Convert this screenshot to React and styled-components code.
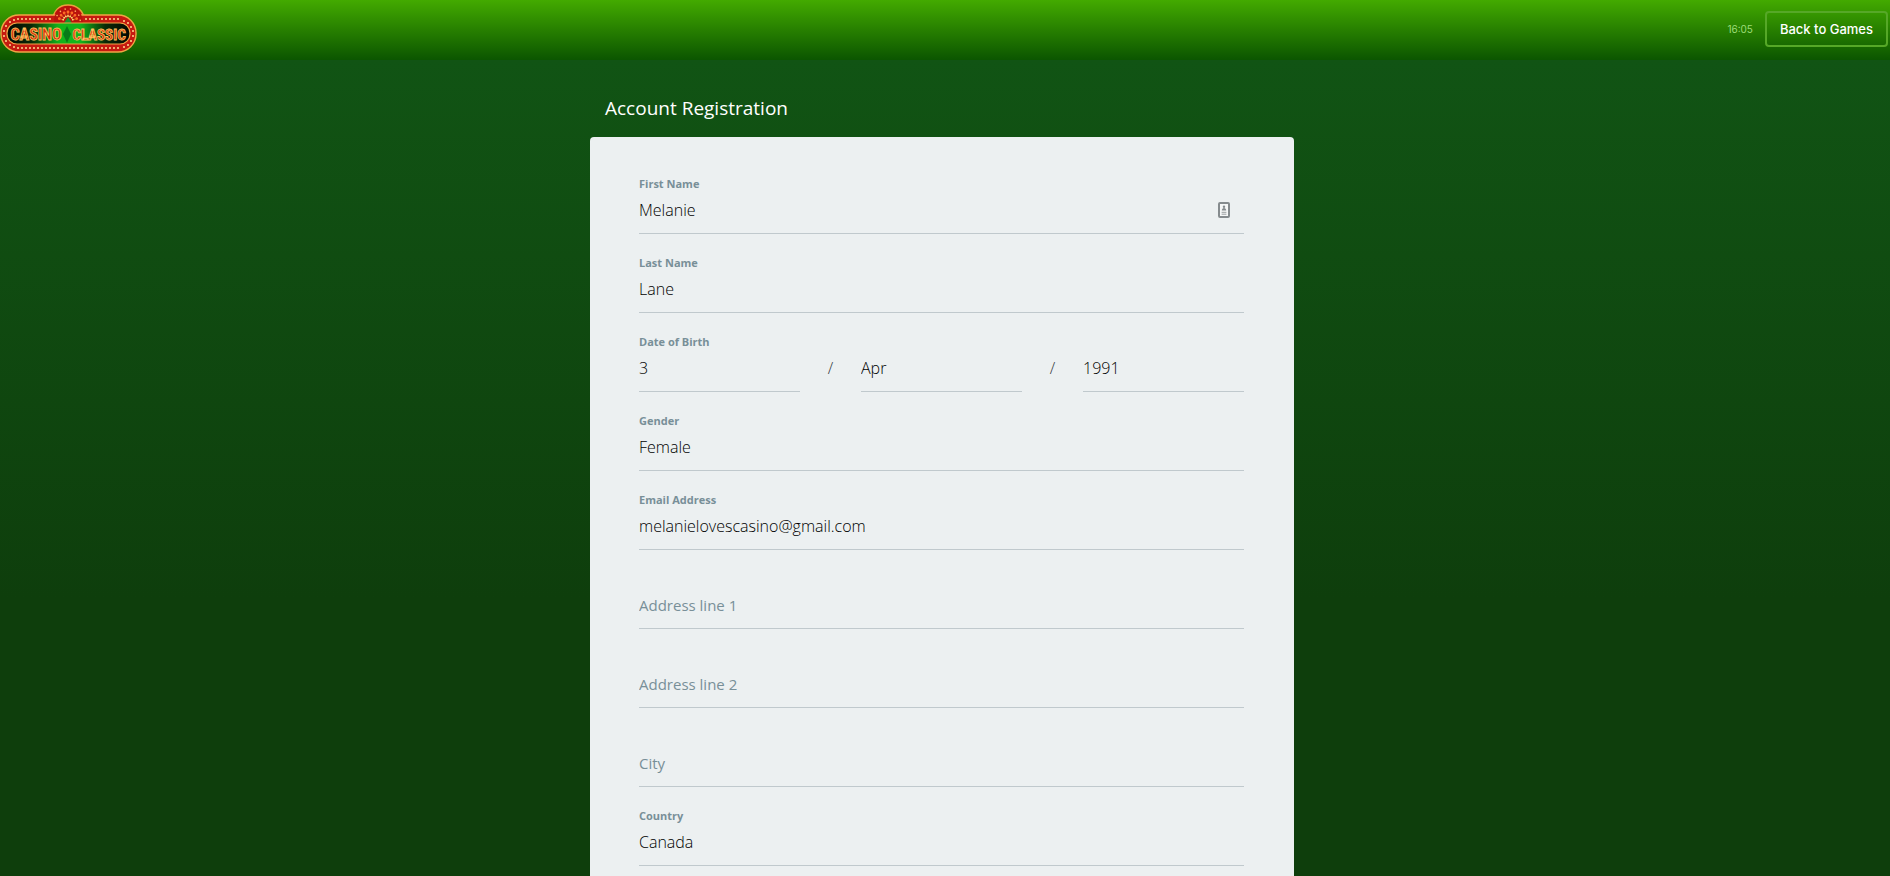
import React from "react";
import styled, { createGlobalStyle } from "styled-components";

const GlobalStyle = createGlobalStyle`
  *, *::before, *::after { box-sizing: border-box; }
  body {
    margin: 0;
    background: #0e3e0c;
    font-family: "Open Sans", "Noto Sans", sans-serif;
  }
`;

const Page = styled.div`
  display: flex;
  flex-direction: column;
  min-height: 100vh;
  background: linear-gradient(#115414 60px, #0e3e0c 600px);
`;

const Header = styled.header`
  display: flex;
  align-items: center;
  justify-content: space-between;
  height: 60px;
  padding: 0 2px 2px 0;
  background: linear-gradient(#43aa00, #0b5500);
`;

const LogoLink = styled.a`
  display: flex;
`;

const HeaderActions = styled.div`
  display: flex;
  align-items: center;
  gap: 12px;
`;

const Clock = styled.time`
  color: #9ddc78;
  font: 400 10px/16px Inter, sans-serif;
`;

const BackButton = styled.button`
  height: 36px;
  padding: 0 13px;
  border: 2px solid #56a827;
  border-radius: 4px;
  background: transparent;
  color: #fff;
  font: 500 13px/20px Inter, sans-serif;
  cursor: pointer;
`;

const Main = styled.main`
  display: flex;
  flex: 1;
  flex-direction: column;
  align-items: center;
  padding-right: 6px;
`;

const Column = styled.div`
  display: flex;
  flex: 1;
  flex-direction: column;
  width: 100%;
  max-width: 704px;
`;

const Title = styled.h1`
  margin: 0;
  padding: 34px 15px 15px;
  color: #fff;
  font-size: 19px;
  font-weight: 500;
  line-height: 28px;
`;

const Card = styled.form`
  flex: 1;
  padding: 34px 50px 0 49px;
  border-radius: 4px 4px 0 0;
  background: #ecf0f1;
`;

const FieldBox = styled.div`
  display: flex;
  flex-direction: column;
  justify-content: flex-end;
  height: 79px;
  padding-bottom: 16px;
  min-width: 0;
`;

const FieldGroup = styled.fieldset`
  display: flex;
  flex-direction: column;
  justify-content: flex-end;
  height: 79px;
  margin: 0;
  padding: 0 0 16px;
  border: 0;
  min-width: 0;
`;

const labelStyle = `
  padding: 0;
  color: #788f98;
  font-size: 11px;
  font-weight: 700;
  line-height: 16px;
`;

const Label = styled.label`${labelStyle}`;
const GroupLabel = styled.span`${labelStyle}`;

const Control = styled.input`
  appearance: none;
  display: block;
  width: 100%;
  height: 42px;
  margin: 0;
  padding: 0 0 6px;
  border: 0;
  border-bottom: 1px solid #c0c9cd;
  border-radius: 0;
  outline: 0;
  background: transparent;
  color: #000;
  font-family: inherit;
  font-size: ${(p) => (p.placeholder ? "15px" : "16px")};
  font-weight: 300;
  line-height: 24px;

  &::placeholder {
    color: #788f98;
    font-weight: 400;
    opacity: 1;
  }
`;

const InputWrap = styled.div`
  display: grid;
  align-items: center;

  & > * { grid-area: 1 / 1; }
`;

const ContactIcon = styled.svg`
  justify-self: end;
  margin: 0 14px 6px 0;
`;

const DateRow = styled.div`
  display: grid;
  grid-template-columns: 1fr 61px 1fr 61px 1fr;
`;

const Slash = styled.span`
  padding-top: 6px;
  color: #33393b;
  font-size: 16px;
  font-weight: 300;
  line-height: 24px;
  text-align: center;
`;

const bulbs = [];
for (let x = 18; x <= 120; x += 4) {
  if (x < 52 || x > 84) bulbs.push([x, 15]);
  bulbs.push([x, 44]);
}
[[14, 16], [10, 18], [6, 22], [4, 27], [4, 32], [6, 37], [10, 41], [14, 43],
 [124, 17], [128, 19], [131, 23], [133, 27], [133, 32], [131, 37], [128, 41], [124, 43]].forEach((p) => bulbs.push(p));

const fan = [-75, -50, -25, 0, 25, 50, 75];

const Logo = () => (
  <svg width="137" height="50" viewBox="0 0 137 50" role="img" aria-label="Casino Classic">
    <defs>
      <linearGradient id="plate" x1="0" x2="1" y1="0" y2="0">
        <stop offset="0" stopColor="#050703" />
        <stop offset="0.2" stopColor="#0a2a07" />
        <stop offset="0.42" stopColor="#12b51b" />
        <stop offset="0.6" stopColor="#12b51b" />
        <stop offset="0.8" stopColor="#0a2a07" />
        <stop offset="1" stopColor="#050703" />
      </linearGradient>
      <linearGradient id="letters" x1="0" x2="0" y1="0" y2="1">
        <stop offset="0" stopColor="#ee3c12" />
        <stop offset="1" stopColor="#b81508" />
      </linearGradient>
    </defs>
    <path d="M53 16C53 7 59 1 68 1s16 6 16 15" fill="#c81610" stroke="#e9a23e" strokeWidth="1.4" />
    <rect x="1" y="11" width="135" height="37" rx="18" fill="#c51a10" stroke="#efa544" strokeWidth="1.4" />
    <path d="M54 20C53 8 60 2 68 2s15 6 15 18z" fill="#b9130d" />
    {fan.map((a) => (
      <g key={a} transform={`rotate(${a} 68 17)`}>
        <path d="M68 13V9" stroke="#d58a2e" strokeWidth="0.7" />
        <circle cx="68" cy="8" r="1.4" fill="#ff6b24" />
        <circle cx="70.5" cy="5" r="0.8" fill="#ffb05c" />
        <circle cx="68" cy="12" r="0.9" fill="#ffd974" />
      </g>
    ))}
    <path d="M64 19l4-6 4 6z" fill="#16972b" />
    {bulbs.map(([x, y]) => (
      <circle key={`${x}-${y}`} cx={x} cy={y} r="1" fill="#ffdb8c" />
    ))}
    <rect x="7" y="19" width="123" height="21" rx="10" fill="url(#plate)" stroke="#f0a444" strokeWidth="1.2" />
    <path d="M67 22l4 8-4 9-4-9z" fill="#087b18" />
    <g
      fontFamily="Roboto Condensed, Roboto, sans-serif"
      fontWeight="700"
      fill="url(#letters)"
      stroke="#ffc35d"
      strokeWidth="0.8"
    >
      <text x="36" y="36" fontSize="16" textAnchor="middle">CASINO</text>
      <text x="99" y="36" fontSize="15" textAnchor="middle">CLASSIC</text>
    </g>
  </svg>
);

const Field = ({ id, label, value, placeholder, type = "text", icon }) => (
  <FieldBox>
    {label && <Label htmlFor={id}>{label}</Label>}
    <InputWrap>
      <Control
        id={id}
        type={type}
        defaultValue={value}
        placeholder={placeholder}
        aria-label={label ? undefined : placeholder}
      />
      {icon}
    </InputWrap>
  </FieldBox>
);

const Select = ({ options, ...rest }) => (
  <Control as="select" {...rest}>
    {options.map((o) => <option key={o}>{o}</option>)}
  </Control>
);

const SelectField = ({ id, label, options }) => (
  <FieldBox>
    <Label htmlFor={id}>{label}</Label>
    <Select id={id} options={options} />
  </FieldBox>
);

const contactIcon = (
  <ContactIcon width="12" height="16" viewBox="0 0 12 16" aria-hidden="true">
    <rect x="1" y="1" width="10" height="14" rx="1" fill="#f5f7f7" stroke="#858b8e" strokeWidth="2" />
    <circle cx="6" cy="4.8" r="1.2" fill="#858b8e" />
    <path d="M3.8 8.6c0-1.6 1-2.6 2.2-2.6s2.2 1 2.2 2.6z" fill="#858b8e" />
    <path d="M3.6 10.3h4.8M3.6 12.2h4.8" stroke="#9a9fa1" strokeWidth="1" />
  </ContactIcon>
);

export default function App() {
  return (
    <Page>
      <GlobalStyle />
      <Header>
        <LogoLink href="#"><Logo /></LogoLink>
        <HeaderActions>
          <Clock>16:05</Clock>
          <BackButton type="button">Back to Games</BackButton>
        </HeaderActions>
      </Header>
      <Main>
        <Column>
          <Title>Account Registration</Title>
          <Card>
            <Field id="first" label="First Name" value="Melanie" icon={contactIcon} />
            <Field id="last" label="Last Name" value="Lane" />
            <FieldGroup aria-labelledby="dob">
              <GroupLabel id="dob">Date of Birth</GroupLabel>
              <DateRow>
                <Select aria-label="Day" options={["3"]} />
                <Slash>/</Slash>
                <Select aria-label="Month" options={["Apr"]} />
                <Slash>/</Slash>
                <Select aria-label="Year" options={["1991"]} />
              </DateRow>
            </FieldGroup>
            <SelectField id="gender" label="Gender" options={["Female"]} />
            <Field id="email" type="email" label="Email Address" value="melanielovescasino@gmail.com" />
            <Field id="address1" placeholder="Address line 1" />
            <Field id="address2" placeholder="Address line 2" />
            <Field id="city" placeholder="City" />
            <SelectField id="country" label="Country" options={["Canada"]} />
          </Card>
        </Column>
      </Main>
    </Page>
  );
}
